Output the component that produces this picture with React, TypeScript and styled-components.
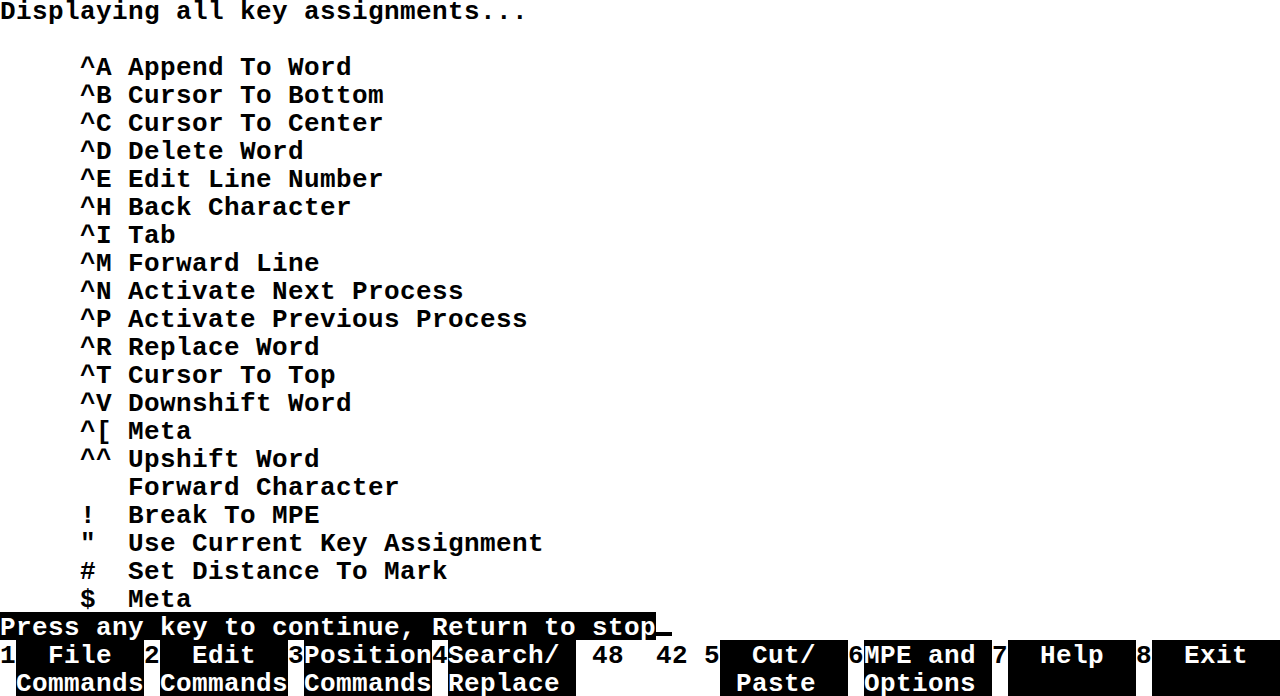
import styled, { createGlobalStyle } from "styled-components";

const GlobalStyle = createGlobalStyle`
  html, body {
    margin: 0;
    padding: 0;
    background: #ffffff;
    overflow: hidden;
  }
`;

// 80x25 terminal, 16x28 cells, top 4px scrolled off
const Screen = styled.div`
  width: 1280px;
  height: 700px;
  margin-top: -4px;
  display: flex;
  flex-direction: column;
  font-family: "Liberation Mono", "DejaVu Sans Mono", monospace;
  font-weight: bold;
  font-size: 26px;
  line-height: 32px;
  letter-spacing: 0.4px;
  color: #000000;
  white-space: pre;
`;

const Line = styled.div`
  height: 28px;
`;

const Listing = styled.div`
  display: grid;
  grid-template-columns: 48px 1fr;
  grid-auto-rows: 28px;
  padding-left: 80px;
  margin-top: 28px;
`;

const Key = styled.span``;

const Desc = styled.span``;

const StatusRow = styled.div`
  display: flex;
  height: 28px;
`;

const Prompt = styled.span`
  height: 28px;
  background: #000000;
  color: #ffffff;
  overflow: hidden;
`;

const Cursor = styled.span`
  display: inline-block;
  box-sizing: border-box;
  width: 16px;
  height: 24px;
  border-bottom: 4px solid #000000;
`;

const KeyBar = styled.div`
  display: flex;
  height: 56px;
`;

const KeyNum = styled.div`
  width: 16px;
  height: 56px;
  overflow: hidden;
`;

const KeyLabel = styled.div`
  width: 128px;
  height: 56px;
  background: #000000;
  color: #ffffff;
  overflow: hidden;
`;

const Filler = styled.div`
  width: 128px;
  height: 56px;
`;

const assignments: [string, string][] = [
  ["^A", "Append To Word"],
  ["^B", "Cursor To Bottom"],
  ["^C", "Cursor To Center"],
  ["^D", "Delete Word"],
  ["^E", "Edit Line Number"],
  ["^H", "Back Character"],
  ["^I", "Tab"],
  ["^M", "Forward Line"],
  ["^N", "Activate Next Process"],
  ["^P", "Activate Previous Process"],
  ["^R", "Replace Word"],
  ["^T", "Cursor To Top"],
  ["^V", "Downshift Word"],
  ["^[", "Meta"],
  ["^^", "Upshift Word"],
  ["", "Forward Character"],
  ["!", "Break To MPE"],
  ['"', "Use Current Key Assignment"],
  ["#", "Set Distance To Mark"],
  ["$", "Meta"],
];

const functionKeys: { num: string; label: [string, string] }[] = [
  { num: "1", label: ["  File", "Commands"] },
  { num: "2", label: ["  Edit", "Commands"] },
  { num: "3", label: ["Position", "Commands"] },
  { num: "4", label: ["Search/", "Replace"] },
  { num: "5", label: ["  Cut/", " Paste"] },
  { num: "6", label: ["MPE and", "Options"] },
  { num: "7", label: ["  Help", ""] },
  { num: "8", label: ["  Exit", ""] },
];

export default function App() {
  return (
    <>
      <GlobalStyle />
      <Screen>
        <Line>Displaying all key assignments...</Line>
        <Listing>
          {assignments.map(([key, desc], i) => (
            <>
              <Key key={`k${i}`}>{key}</Key>
              <Desc key={`d${i}`}>{desc}</Desc>
            </>
          ))}
        </Listing>
        <StatusRow>
          <Prompt>Press any key to continue, Return to stop</Prompt>
          <Cursor />
        </StatusRow>
        <KeyBar>
          {functionKeys.map((fk, i) => (
            <>
              {i === 4 && <Filler key="filler"> 48  42 </Filler>}
              <KeyNum key={`n${fk.num}`}>
                <Line>{fk.num}</Line>
              </KeyNum>
              <KeyLabel key={`l${fk.num}`}>
                <Line>{fk.label[0]}</Line>
                <Line>{fk.label[1]}</Line>
              </KeyLabel>
            </>
          ))}
        </KeyBar>
      </Screen>
    </>
  );
}
